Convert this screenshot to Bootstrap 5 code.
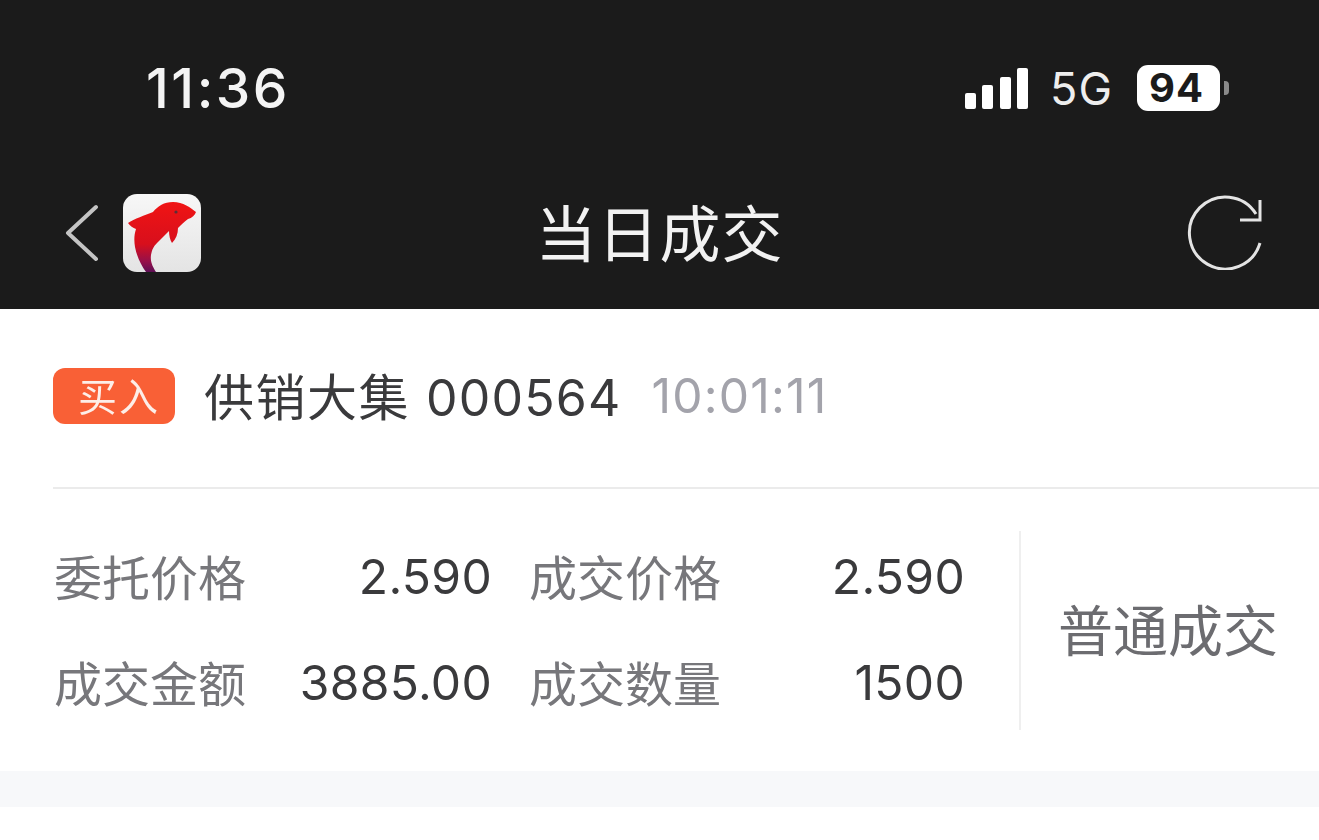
<!DOCTYPE html>
<html lang="zh-CN">
<head>
  <meta charset="UTF-8">
  <meta name="viewport" content="width=device-width, initial-scale=1">
  <title>当日成交</title>
  <link href="https://cdn.jsdelivr.net/npm/bootstrap@5.3.0/dist/css/bootstrap.min.css" rel="stylesheet">
  <style>
    body {
      font-family: Inter, "Noto Sans CJK SC", sans-serif;
      background: #fff;
      overflow: hidden;
      filter: blur(0.5px);
    }
    .top-dark { background: #1b1b1b; height: 309px; color: #f4f4f4; }
    .status-row { height: 176px; padding: 0 90px 0 146px; }
    .clock { font-size: 55px; font-weight: 500; line-height: 1; letter-spacing: 2.5px; }
    .signal-bars { gap: 6.5px; margin-right: 22px; }
    .signal-bars i { display: block; width: 11px; background: #fff; border-radius: 2px; }
    .net-label { font-size: 45px; font-weight: 400; line-height: 1; margin-right: 24px; color: #eee; letter-spacing: 1px; }
    .battery-box {
      width: 83px; height: 46px; background: #fff; border-radius: 11px;
      color: #1b1b1b; font-size: 40px; font-weight: 700; line-height: 46px;
      padding-left: 12px; letter-spacing: 1px;
    }
    .battery-nub { width: 5px; height: 14px; background: #8a8a8a; border-radius: 0 4px 4px 0; margin-left: 4px; }
    .nav-row { height: 112px; padding: 0 56px; display: grid; grid-template-columns: 1fr auto 1fr; align-items: center; }
    .nav-back { padding: 2px 0 0 9px; }
    .nav-title { font-size: 61px; letter-spacing: 1px; line-height: 1; padding-bottom: 4px; font-family: "Noto Sans CJK SC", sans-serif; font-weight: 400; color: #f2f2f2; }
    .trade-head { height: 180px; margin-left: 53px; border-bottom: 2px solid #ebebeb; gap: 29px; padding-bottom: 4px; }
    .side-tag {
      width: 122px; height: 56px; background: #f96036; color: #fdeee8; border-radius: 12px;
      font-size: 39px; letter-spacing: 2px; line-height: 52px; text-align: center; padding-left: 10px;
      font-family: "Noto Sans CJK SC", sans-serif;
    }
    .stock-name { font-size: 50px; line-height: 1; color: #3a3a3c; }
    .stock-name b { font-weight: 400; font-family: "Noto Sans CJK SC", sans-serif; margin-right: 16px; letter-spacing: 1.5px; }
    .stock-code { letter-spacing: 1.2px; }
    .trade-time { font-size: 48px; line-height: 1; color: #a3a3ab; font-weight: 400; margin-left: 1px; letter-spacing: 1.2px; }
    .trade-body { height: 282px; padding: 42px 0 41px 54px; }
    .data-grid { display: grid; grid-template-columns: 438px 436px; column-gap: 37px; width: 911px; }
    .data-cell { height: 106px; font-size: 48px; line-height: 1; padding-bottom: 14px; letter-spacing: 0.3px; }
    .data-label { font-family: "Noto Sans CJK SC", sans-serif; font-size: 48px; color: #77777b; padding-bottom: 5px; letter-spacing: 0; }
    .data-value { color: #3a3a3c; font-weight: 400; }
    .deal-type {
      margin-left: 54px; border-left: 2px solid #efefef; padding: 0 0 6px 37px;
      font-family: "Noto Sans CJK SC", sans-serif; font-size: 55px; color: #6c6c70;
    }
    .gap-band { height: 36px; background: #f7f8fa; }
  </style>
</head>
<body>
  <!-- Dark header: status bar and title -->
  <div class="top-dark">
    <div class="status-row d-flex align-items-center justify-content-between">
      <div class="clock">11:36</div>
      <div class="d-flex align-items-center">
        <div class="signal-bars d-flex align-items-end">
          <i style="height: 16px"></i>
          <i style="height: 24px"></i>
          <i style="height: 32px"></i>
          <i style="height: 41px"></i>
        </div>
        <div class="net-label">5G</div>
        <div class="battery-box">94</div>
        <div class="battery-nub"></div>
      </div>
    </div>
    <div class="nav-row">
      <div class="nav-back d-flex align-items-center">
        <svg width="34" height="58" viewBox="0 0 34 58" fill="none" stroke="#c4c4c4" stroke-width="4" stroke-linecap="round" stroke-linejoin="round" class="me-4">
          <path d="M31 3 3 29l28 26"/>
        </svg>
        <svg width="78" height="78" viewBox="0 0 78 78">
          <defs>
            <linearGradient id="tileFill" x1="0" y1="0" x2="0" y2="1">
              <stop offset="0" stop-color="#f7f7f7"/>
              <stop offset="1" stop-color="#e4e4e4"/>
            </linearGradient>
            <linearGradient id="dolphinFill" x1="0" y1="0" x2="0" y2="1">
              <stop offset="0" stop-color="#f01414"/>
              <stop offset="0.6" stop-color="#d80f1c"/>
              <stop offset="0.85" stop-color="#96104a"/>
              <stop offset="1" stop-color="#5e0f55"/>
            </linearGradient>
            <clipPath id="tileClip"><rect width="78" height="78" rx="14"/></clipPath>
          </defs>
          <g clip-path="url(#tileClip)">
            <rect width="78" height="78" fill="url(#tileFill)"/>
            <path fill="url(#dolphinFill)" d="M73 18C68 14 60 8 50 8 41 8 35 12 30 18 22 21 11 25 5 29 7 32 10 34 13 35 11 41 11 47 12 53 14 63 18 71 23 78H33C30 73 27 68 28 61 29 55 31 52 34 49 38 45 42 41 46 37 46 41 47 46 49 49 53 45 55 40 55 34 58 31 61 28 65 25 69 24 72 21 73 18Z"/>
            <circle cx="53" cy="18" r="1.6" fill="#5a3038"/>
          </g>
        </svg>
      </div>
      <div class="nav-title">当日成交</div>
      <div class="d-flex justify-content-end">
        <svg width="76" height="76" viewBox="1187 194 76 76" fill="none" stroke="#e4e4e4" stroke-width="3">
          <path d="M1260 243A36 36 0 1 1 1256 214"/>
          <path d="M1240 220h20v-20"/>
        </svg>
      </div>
    </div>
  </div>

  <!-- Trade record -->
  <div class="trade-head d-flex align-items-center">
    <div class="side-tag">买入</div>
    <div class="stock-name"><b>供销大集</b><span class="stock-code">000564</span></div>
    <div class="trade-time">10:01:11</div>
  </div>
  <div class="trade-body d-flex">
    <div class="data-grid">
      <div class="data-cell d-flex justify-content-between align-items-center"><span class="data-label">委托价格</span><span class="data-value">2.590</span></div>
      <div class="data-cell d-flex justify-content-between align-items-center"><span class="data-label">成交价格</span><span class="data-value">2.590</span></div>
      <div class="data-cell d-flex justify-content-between align-items-center"><span class="data-label">成交金额</span><span class="data-value">3885.00</span></div>
      <div class="data-cell d-flex justify-content-between align-items-center"><span class="data-label">成交数量</span><span class="data-value">1500</span></div>
    </div>
    <div class="deal-type d-flex align-items-center flex-grow-1">普通成交</div>
  </div>
  <div class="gap-band"></div>

  <script src="https://cdn.jsdelivr.net/npm/bootstrap@5.3.0/dist/js/bootstrap.bundle.min.js"></script>
</body>
</html>
